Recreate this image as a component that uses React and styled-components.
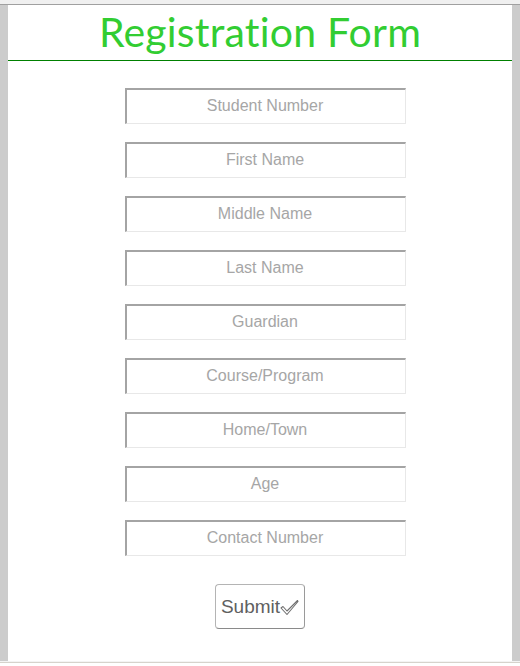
import React from "react";
import styled, { createGlobalStyle } from "styled-components";

const Global = createGlobalStyle`
  html, body { margin: 0; padding: 0; }
  body { background: #ffffff; font-family: "Liberation Sans", Arial, sans-serif; }
  #root { height: 666px; }
`;

const Frame = styled.div`
  height: 666px;
  display: flex;
  flex-direction: column;
  background: #f0f0f0;
`;

const TopStrip = styled.div`
  height: 4px;
  background: #f0f0f0;
  border-bottom: 1px solid #a0a0a0;
`;

const Viewport = styled.div`
  flex: 1;
  background: #cccccc;
  padding: 0 8px;
  display: flex;
`;

const Panel = styled.main`
  flex: 1;
  background: #ffffff;
  display: flex;
  flex-direction: column;
`;

const BottomStrip = styled.div`
  height: 4px;
  background: #ffffff;
  border-top: 1px solid #f4f4f4;
  box-shadow: inset 0 1px 0 #d6d3cc;
`;

const Header = styled.header`
  height: 55px;
  border-bottom: 1px solid #008000;
  display: flex;
  justify-content: center;
  align-items: flex-end;
`;

const Title = styled.h1`
  margin: 0 0 4px;
  font-family: Lato, "Open Sans", sans-serif;
  font-weight: 400;
  font-size: 41px;
  line-height: 48px;
  color: #32cd32;
  letter-spacing: 0.2px;
`;

const Form = styled.form`
  display: flex;
  flex-direction: column;
  align-items: center;
  padding-top: 27px;
  gap: 18px;
`;

const Field = styled.input`
  box-sizing: border-box;
  width: 281px;
  height: 36px;
  margin-left: 11px;
  border-style: solid;
  border-width: 2px 1px 1px 2px;
  border-color: #a4a4a4 #e8e8e8 #e8e8e8 #a4a4a4;
  font-family: "Liberation Sans", Arial, sans-serif;
  font-size: 16px;
  text-align: center;
  padding: 0 2px 2px 0;
  outline: none;
  background: #ffffff;
  &::placeholder { color: #a6a6a6; }
`;

const SubmitButton = styled.button`
  margin-top: 10px;
  box-sizing: border-box;
  width: 90px;
  height: 45px;
  background: #ffffff;
  border: 1px solid #b4b4b4;
  border-bottom-color: #8a8a8a;
  border-right-color: #9a9a9a;
  border-radius: 4px;
  font-family: "Liberation Sans", Arial, sans-serif;
  font-size: 19px;
  color: #606060;
  padding: 0;
  display: flex;
  align-items: center;
  justify-content: center;
  cursor: pointer;
`;

const Check = styled.svg`
  width: 19px;
  height: 17px;
  margin-top: 1px;
`;

const fields = [
  "Student Number",
  "First Name",
  "Middle Name",
  "Last Name",
  "Guardian",
  "Course/Program",
  "Home/Town",
  "Age",
  "Contact Number",
];

export default function App() {
  return (
    <>
      <Global />
      <Frame>
        <TopStrip />
        <Viewport>
          <Panel>
            <Header>
              <Title>Registration Form</Title>
            </Header>
            <Form onSubmit={(e) => e.preventDefault()}>
              {fields.map((f) => (
                <Field key={f} type="text" placeholder={f} />
              ))}
              <SubmitButton type="submit">
                Submit
                <Check viewBox="0 0 19 17">
                  <path
                    d="M1 9 L3 7.5 L7 12 L17.5 1.5 L18 2.5 L7 15.5 Z"
                    fill="none"
                    stroke="#707070"
                    strokeWidth="1.1"
                    strokeLinejoin="round"
                  />
                </Check>
              </SubmitButton>
            </Form>
          </Panel>
        </Viewport>
        <BottomStrip />
      </Frame>
    </>
  );
}
